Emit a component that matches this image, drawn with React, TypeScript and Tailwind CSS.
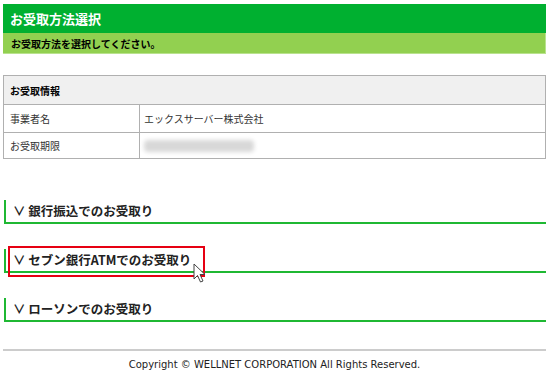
// Receipt method selection page
const JP = { fontFamily: '"Noto Sans CJK JP", "Noto Sans", sans-serif' };

function Section({ label, highlight = false }: { label: string; highlight?: boolean }) {
  return (
    <div className="relative">
      <div className="flex h-[24px] items-center border-b-2 border-l-2 border-[#1fb833] pl-[7px]">
        <span className="text-[12.5px] font-bold text-[#222]" style={JP}>
          ∨ {label}
        </span>
      </div>
      {highlight && (
        <>
          <div className="pointer-events-none absolute left-[4px] top-[-3px] h-[31px] w-[197px] border-2 border-[#e60012]" />
          <svg className="absolute left-[189px] top-[14px]" width="16" height="22" viewBox="0 0 16 22">
            <path d="M1 1 L1 16 L4.5 12.5 L7.5 19 L10 18 L7 11.5 L12 11.5 Z" fill="#fff" stroke="#444" strokeWidth="1" strokeLinejoin="round" />
          </svg>
        </>
      )}
    </div>
  );
}

export default function App() {
  return (
    <div className="h-[381px] w-[550px] overflow-hidden bg-white pl-[3px] pr-[4px] pt-[4px]">
      {/* title bars */}
      <div className="flex h-[29px] items-center bg-[#00b030] pl-[7px]">
        <h1 className="text-[13px] font-bold text-white" style={JP}>お受取方法選択</h1>
      </div>
      <div className="flex h-[21px] items-center border-b border-r border-[#b9e28e] bg-[#92d050] pl-[8px]">
        <p className="text-[10px] font-bold text-black" style={JP}>お受取方法を選択してください。</p>
      </div>

      {/* info table */}
      <table className="mt-[21px] w-full border-collapse text-[10px] text-[#333]" style={JP}>
        <tbody>
          <tr className="h-[29px] bg-[#f0f0f0]">
            <th colSpan={2} className="border border-[#b0b0b0] pl-[6px] text-left font-bold text-black">お受取情報</th>
          </tr>
          <tr className="h-[28px]">
            <td className="w-[136px] border border-[#b0b0b0] pl-[6px]">事業者名</td>
            <td className="border border-[#b0b0b0] pl-[4px]">エックスサーバー株式会社</td>
          </tr>
          <tr className="h-[26px]">
            <td className="border border-[#b0b0b0] pl-[6px]">お受取期限</td>
            <td className="border border-[#b0b0b0] pl-[4px]">
              <div className="h-[12px] w-[110px] rounded-sm bg-[#d8d8d8] blur-[2px]" />
            </td>
          </tr>
        </tbody>
      </table>

      {/* receipt methods */}
      <div className="mt-[41px] flex flex-col gap-[25px] pl-px">
        <Section label="銀行振込でのお受取り" />
        <Section label="セブン銀行ATMでのお受取り" highlight />
        <Section label="ローソンでのお受取り" />
      </div>

      {/* footer */}
      <div className="mt-[27px] border-t-2 border-[#cccccc] pt-[6px] text-center">
        <p className="text-[10px] leading-[16px] text-[#222]" style={{ fontFamily: '"DejaVu Sans", Tahoma, sans-serif' }}>
          Copyright © WELLNET CORPORATION All Rights Reserved.
        </p>
      </div>
    </div>
  );
}
